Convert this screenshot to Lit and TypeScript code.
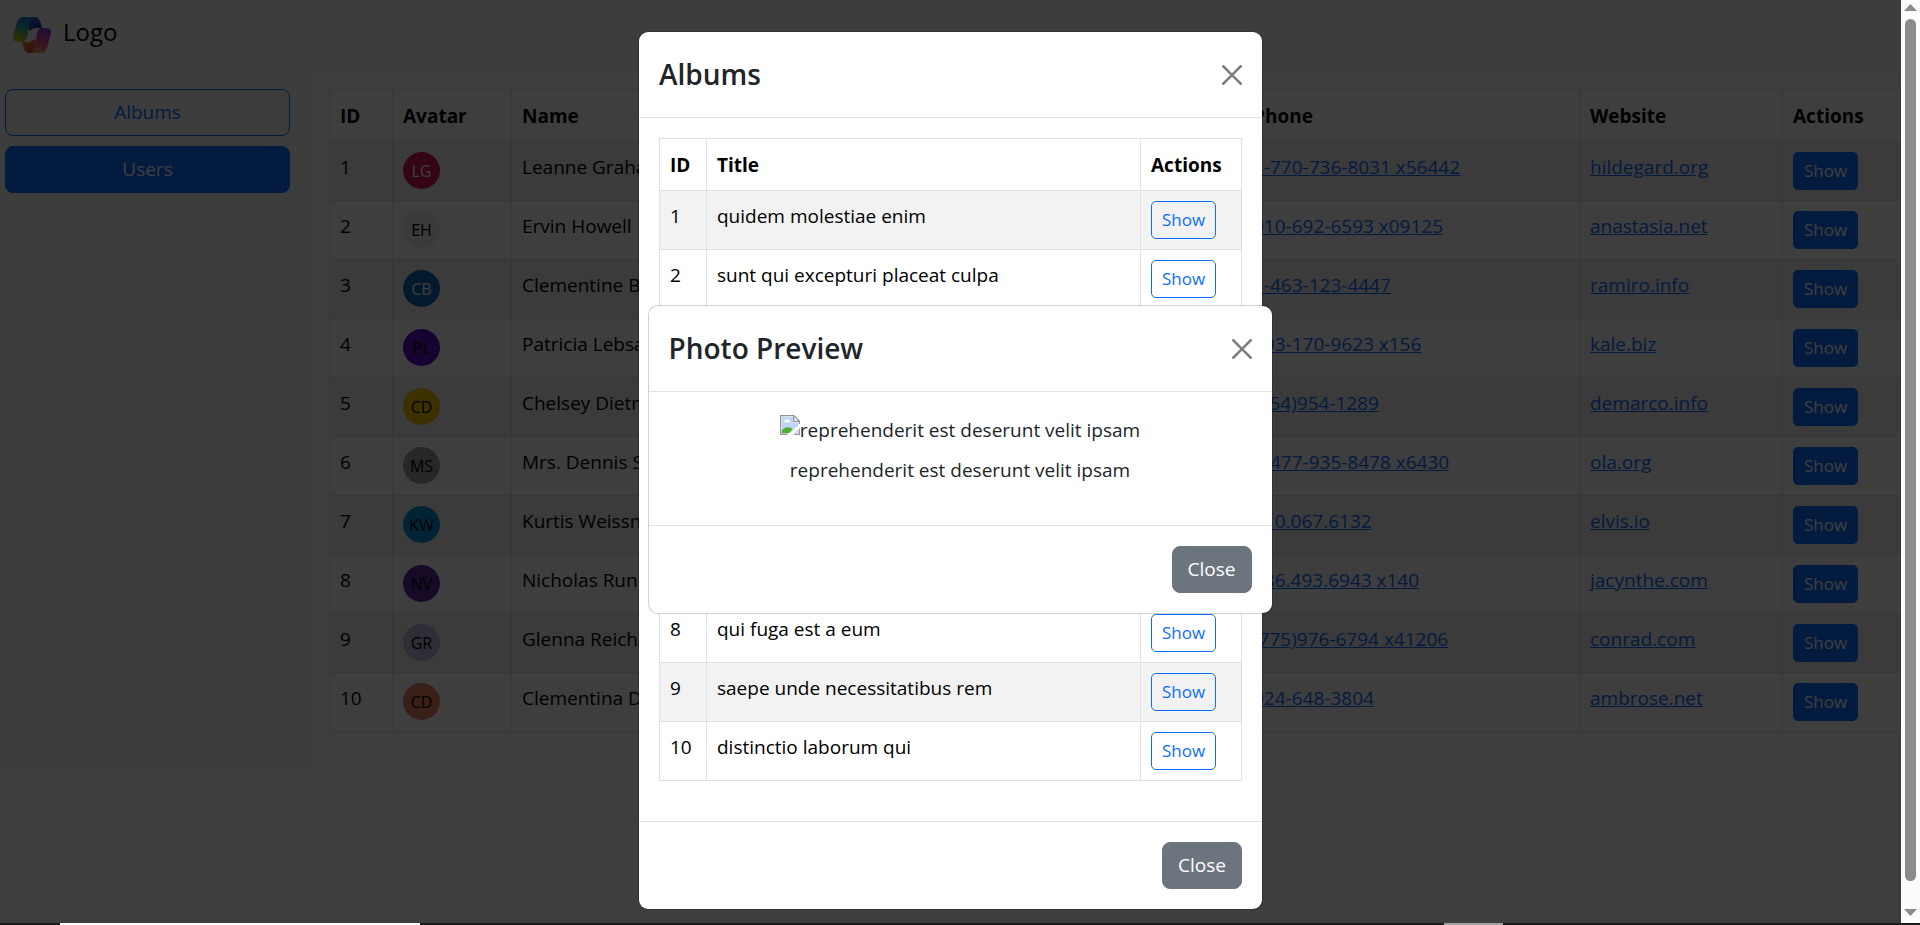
import { LitElement, html, css, svg } from "lit";
import { customElement, property } from "lit/decorators.js";

interface User {
  id: number;
  initials: string;
  color: string;
  ink: string;
  name: string;
  username: string;
  email: string;
  phone: string;
  website: string;
}

const users: User[] = [
  { id: 1, initials: "LG", color: "#d8145a", ink: "#ffffff", name: "Leanne Graham", username: "Bret", email: "Sincere@april.biz", phone: "1-770-736-8031 x56442", website: "hildegard.org" },
  { id: 2, initials: "EH", color: "#ececec", ink: "#000000", name: "Ervin Howell", username: "Antonette", email: "Shanna@melissa.tv", phone: "010-692-6593 x09125", website: "anastasia.net" },
  { id: 3, initials: "CB", color: "#1068bc", ink: "#ffffff", name: "Clementine Bauch", username: "Samantha", email: "Nathan@yesenia.net", phone: "1-463-123-4447", website: "ramiro.info" },
  { id: 4, initials: "PL", color: "#5a0fc8", ink: "#000000", name: "Patricia Lebsack", username: "Karianne", email: "Julianne.OConner@kory.org", phone: "493-170-9623 x156", website: "kale.biz" },
  { id: 5, initials: "CD", color: "#f5c400", ink: "#000000", name: "Chelsey Dietrich", username: "Kamren", email: "Lucio_Hettinger@annie.ca", phone: "(254)954-1289", website: "demarco.info" },
  { id: 6, initials: "MS", color: "#a0a0a0", ink: "#000000", name: "Mrs. Dennis Schulist", username: "Leopoldo_Corkery", email: "Karley_Dach@jasper.info", phone: "1-477-935-8478 x6430", website: "ola.org" },
  { id: 7, initials: "KW", color: "#0096dc", ink: "#000000", name: "Kurtis Weissnat", username: "Elwyn.Skiles", email: "Telly.Hoeger@billy.biz", phone: "210.067.6132", website: "elvis.io" },
  { id: 8, initials: "NV", color: "#5b2ca0", ink: "#000000", name: "Nicholas Runolfsdottir V", username: "Maxime_Nienow", email: "Sherwood@rosamond.me", phone: "586.493.6943 x140", website: "jacynthe.com" },
  { id: 9, initials: "GR", color: "#c4b8dc", ink: "#000000", name: "Glenna Reichert", username: "Delphine", email: "Chaim_McDermott@dana.io", phone: "(775)976-6794 x41206", website: "conrad.com" },
  { id: 10, initials: "CD", color: "#e8825f", ink: "#000000", name: "Clementina DuBuque", username: "Moriah.Stanton", email: "Rey.Padberg@karina.biz", phone: "024-648-3804", website: "ambrose.net" },
];

const albums: string[] = [
  "quidem molestiae enim",
  "sunt qui excepturi placeat culpa",
  "omnis laborum odio",
  "non esse culpa molestiae omnis sed optio",
  "eaque aut omnis a",
  "natus impedit quibusdam illo est",
  "quibusdam autem aliquid et et quia",
  "qui fuga est a eum",
  "saepe unde necessitatibus rem",
  "distinctio laborum qui",
];

const shared = css`
  *,
  *::before,
  *::after {
    box-sizing: border-box;
  }
  button {
    font-family: inherit;
    cursor: pointer;
  }
  .btn {
    padding: 8px 15px;
    border: 1px solid #0d6efd;
    border-radius: 8px;
    background: transparent;
    color: #0d6efd;
    font-size: 19px;
    line-height: 29px;
    text-align: center;
  }
  .btn.solid {
    background: #0d6efd;
    color: #fff;
  }
  .btn.secondary {
    border-color: #6c757d;
    background: #6c757d;
    color: #fff;
  }
  .btn.small {
    display: block;
    padding: 5px 10px;
    border-radius: 5px;
    font-size: 17px;
    line-height: 26px;
  }
  table {
    width: 100%;
    border-collapse: collapse;
    table-layout: fixed;
    color: #000;
  }
  th,
  td {
    padding: 10px;
    border: 1px solid #dee2e6;
    text-align: left;
    vertical-align: top;
    white-space: nowrap;
  }
  th {
    padding-top: 11px;
    font-weight: 700;
  }
  tbody tr:nth-child(odd) {
    background: #f2f2f2;
  }
`;

@customElement("modal-card")
class ModalCard extends LitElement {
  @property() heading = "";

  static styles = [
    shared,
    css`
      :host {
        display: block;
        width: 625px;
        max-width: 100%;
        border: 1px solid rgba(0, 0, 0, 0.175);
        border-radius: 10px;
        background: #fff;
        background-clip: padding-box;
        color: #212529;
      }
      .head {
        display: flex;
        align-items: center;
        justify-content: space-between;
        padding: 20px;
        border-bottom: 1px solid #dee2e6;
      }
      .title {
        margin: 0;
        font-size: 28px;
        font-weight: 600;
        line-height: 45px;
      }
      .dismiss {
        display: flex;
        padding: 0;
        border: 0;
        background: none;
        opacity: 0.5;
      }
      .body {
        padding: 20px;
      }
      .foot {
        display: flex;
        justify-content: flex-end;
        padding: 20px;
        border-top: 1px solid #dee2e6;
      }
    `,
  ];

  render() {
    return html`
      <div class="head">
        <h4 class="title">${this.heading}</h4>
        <button class="dismiss" type="button" aria-label="Close">
          <svg width="20" height="20" viewBox="0 0 16 16" fill="#000">
            <path d="M.293.293a1 1 0 0 1 1.414 0L8 6.586 14.293.293a1 1 0 1 1 1.414 1.414L9.414 8l6.293 6.293a1 1 0 0 1-1.414 1.414L8 9.414l-6.293 6.293a1 1 0 0 1-1.414-1.414L6.586 8 .293 1.707a1 1 0 0 1 0-1.414z" />
          </svg>
        </button>
      </div>
      <div class="body"><slot></slot></div>
      <div class="foot"><button class="btn secondary" type="button">Close</button></div>
    `;
  }
}

const logo = svg`
  <svg class="mark" width="38" height="36" viewBox="0 0 38 36" aria-hidden="true">
    <defs>
      <linearGradient id="left" x1="0.6" y1="0" x2="0.3" y2="1">
        <stop offset="0" stop-color="#2277dd" />
        <stop offset="0.45" stop-color="#2fa0a0" />
        <stop offset="0.75" stop-color="#8cb63a" />
        <stop offset="1" stop-color="#e8c020" />
      </linearGradient>
      <linearGradient id="top" x1="0" y1="0" x2="1" y2="1">
        <stop offset="0" stop-color="#2a5fd0" />
        <stop offset="1" stop-color="#16339c" />
      </linearGradient>
      <linearGradient id="right" x1="0.7" y1="0" x2="0.4" y2="1">
        <stop offset="0" stop-color="#8a3be0" />
        <stop offset="0.5" stop-color="#d84a8c" />
        <stop offset="1" stop-color="#f0904c" />
      </linearGradient>
      <linearGradient id="bottom" x1="0" y1="0" x2="1" y2="1">
        <stop offset="0" stop-color="#e88a2c" />
        <stop offset="1" stop-color="#c83a24" />
      </linearGradient>
    </defs>
    <path fill="#f4ecf4" d="M17 9h9l-5 18h-9z" />
    <path fill="url(#top)" d="M15 0h7c3 0 4 2 5 4l2 7h-6c-3 0-4 1-6 3l-4-6z" />
    <path fill="url(#bottom)" d="M23 36h-7c-3 0-4-2-5-4l-2-7h6c3 0 4-1 6-3l4 6z" />
    <path fill="url(#left)" d="M10 0h12c-3 0-4 2-5 5l-3 15c-1 3-2 5-5 5H5c-4 0-6-3-5-6L4 5c1-3 3-5 6-5z" />
    <path fill="url(#right)" d="M28 36H16c3 0 4-2 5-5l3-15c1-3 2-5 5-5h4c4 0 6 3 5 6l-4 14c-1 3-3 5-6 5z" />
  </svg>`;

const missingImage = svg`
  <svg class="missing" width="20" height="20" viewBox="0 0 16 16" aria-hidden="true">
    <path fill="#fff" d="M.5.5h10.6l4.4 4.4v10.6H.5z" />
    <path fill="#c3d5f5" d="M1.5 1.5h9V6h4v8.500H1.500z" />
    <path fill="#fff" d="M3 5.500c0-1 .8-1.500 1.600-1.300C5 3.200 6.600 3.200 7 4.400c1 0 1.400.6 1.400 1.400H3z" />
    <path fill="#4fae2e" d="M1.500 14.500v-2.300c1.600-1.700 3.600-2.600 5.400-2.400 1.400.2 2.600 1 3.200 1.700l-3.200 3z" />
    <path fill="none" stroke="#8f9499" d="M.5 15.500V.5h10.600l4.400 4.400v2.600M.5 15.500h5.300M11 .5v4.500h4.500" />
    <path fill="#fff" d="M6 16L16 7v3l-6.500 6z" />
    <path fill="none" stroke="#8f9499" d="M15.500 11v4.500H11" />
  </svg>`;

@customElement("app-root")
class AppRoot extends LitElement {
  static styles = [
    shared,
    css`
      :host {
        position: relative;
        display: grid;
        grid-template: 1fr 2px / minmax(0, 1fr) 19px;
        height: 100vh;
        overflow: hidden;
        background: #fff;
        font-family: "Open Sans", "Noto Sans", sans-serif;
        font-size: 19px;
        line-height: 30px;
        color: #212529;
      }
      .page {
        position: relative;
        min-height: 0;
        overflow: hidden;
      }
      .topbar {
        display: flex;
        align-items: flex-start;
        gap: 12px;
        height: 72px;
        padding: 17px 13px;
        background: #f8f9fa;
        color: #000;
        font-size: 24px;
      }
      .columns {
        display: grid;
        grid-template-columns: 312px minmax(0, 1fr);
      }
      .sidebar {
        display: flex;
        flex-direction: column;
        gap: 10px;
        min-height: 700px;
        padding: 17px 22px 17px 5px;
        background: #f8f9fa;
      }
      .content {
        padding: 17px 0 0 17px;
      }
      .c-id {
        width: 63px;
      }
      .c-avatar {
        width: 119px;
      }
      .c-phone {
        width: 337px;
      }
      .c-site {
        width: 203px;
      }
      .c-act {
        width: 118px;
      }
      .content td:nth-child(2) {
        padding-bottom: 0;
      }
      .avatar {
        display: flex;
        align-items: center;
        justify-content: center;
        width: 37px;
        height: 37px;
        border-radius: 50%;
        font-size: 16px;
        line-height: 20px;
      }
      a {
        color: #0d6efd;
        text-decoration: underline;
      }
      .backdrop {
        position: absolute;
        inset: 0;
        display: flex;
        align-items: flex-start;
        justify-content: center;
        padding-top: 31px;
        background: rgba(0, 0, 0, 0.755);
      }
      .front {
        position: absolute;
        inset: 0;
        display: flex;
        align-items: center;
        justify-content: center;
        padding-bottom: 6px;
      }
      .albums {
        margin-bottom: 20px;
      }
      .a-id {
        width: 47px;
      }
      .a-act {
        width: 101px;
      }
      .preview {
        display: flex;
        flex-direction: column;
        align-items: center;
        gap: 10px;
        padding-top: 3px;
      }
      .picture {
        display: flex;
        align-items: flex-start;
      }
      .caption {
        margin: 0 0 20px;
      }
      .scroll {
        display: flex;
        flex-direction: column;
        align-items: center;
        gap: 8px;
        padding: 4px 0 7px;
        background: #fcfcfc;
      }
      .arrow {
        display: block;
      }
      .thumb {
        width: 11px;
        flex: 1;
        margin-bottom: 20px;
        border-radius: 6px;
        background: #8b8b8b;
      }
      .strip {
        grid-column: 1 / -1;
        display: grid;
        grid-template-columns: 60px 360px 1fr 59px 417px;
        background: #1b1919;
      }
      .light {
        grid-column: 2;
        background: #fff;
      }
      .gray {
        grid-column: 4;
        background: #a0a0a0;
      }
    `,
  ];

  render() {
    return html`
      <div class="page">
        <header class="topbar">${logo}<span>Logo</span></header>
        <div class="columns">
          <nav class="sidebar">
            <button class="btn" type="button">Albums</button>
            <button class="btn solid" type="button">Users</button>
          </nav>
          <main class="content">
            <table>
              <colgroup>
                <col class="c-id" />
                <col class="c-avatar" />
                <col />
                <col />
                <col />
                <col class="c-phone" />
                <col class="c-site" />
                <col class="c-act" />
              </colgroup>
              <thead>
                <tr>
                  <th>ID</th>
                  <th>Avatar</th>
                  <th>Name</th>
                  <th>Username</th>
                  <th>Email</th>
                  <th>Phone</th>
                  <th>Website</th>
                  <th>Actions</th>
                </tr>
              </thead>
              <tbody>
                ${users.map(
                  (u) => html`<tr>
                    <td>${u.id}</td>
                    <td><span class="avatar" style="background:${u.color};color:${u.ink}">${u.initials}</span></td>
                    <td>${u.name}</td>
                    <td>${u.username}</td>
                    <td>${u.email}</td>
                    <td><a href="#phone-${u.id}">${u.phone}</a></td>
                    <td><a href="#site-${u.id}">${u.website}</a></td>
                    <td><button class="btn solid small" type="button">Show</button></td>
                  </tr>`
                )}
              </tbody>
            </table>
          </main>
        </div>
        <div class="backdrop">
          <modal-card heading="Albums" role="dialog" aria-label="Albums">
            <table class="albums">
              <colgroup>
                <col class="a-id" />
                <col />
                <col class="a-act" />
              </colgroup>
              <thead>
                <tr>
                  <th>ID</th>
                  <th>Title</th>
                  <th>Actions</th>
                </tr>
              </thead>
              <tbody>
                ${albums.map(
                  (title, i) => html`<tr>
                    <td>${i + 1}</td>
                    <td>${title}</td>
                    <td><button class="btn small" type="button">Show</button></td>
                  </tr>`
                )}
              </tbody>
            </table>
          </modal-card>
        </div>
      </div>
      <div class="scroll" aria-hidden="true">
        <svg class="arrow" width="13" height="7" viewBox="0 0 13 7"><path fill="#8b8b8b" d="M6.500 0L13 7H0z" /></svg>
        <div class="thumb"></div>
        <svg class="arrow" width="13" height="7" viewBox="0 0 13 7"><path fill="#8b8b8b" d="M0 0h13L6.500 7z" /></svg>
      </div>
      <div class="strip" aria-hidden="true">
        <span class="light"></span>
        <span class="gray"></span>
      </div>
      <div class="front">
        <modal-card heading="Photo Preview" role="dialog" aria-label="Photo Preview">
          <div class="preview">
            <div class="picture">${missingImage}<span>reprehenderit est deserunt velit ipsam</span></div>
            <p class="caption">reprehenderit est deserunt velit ipsam</p>
          </div>
        </modal-card>
      </div>
    `;
  }
}
